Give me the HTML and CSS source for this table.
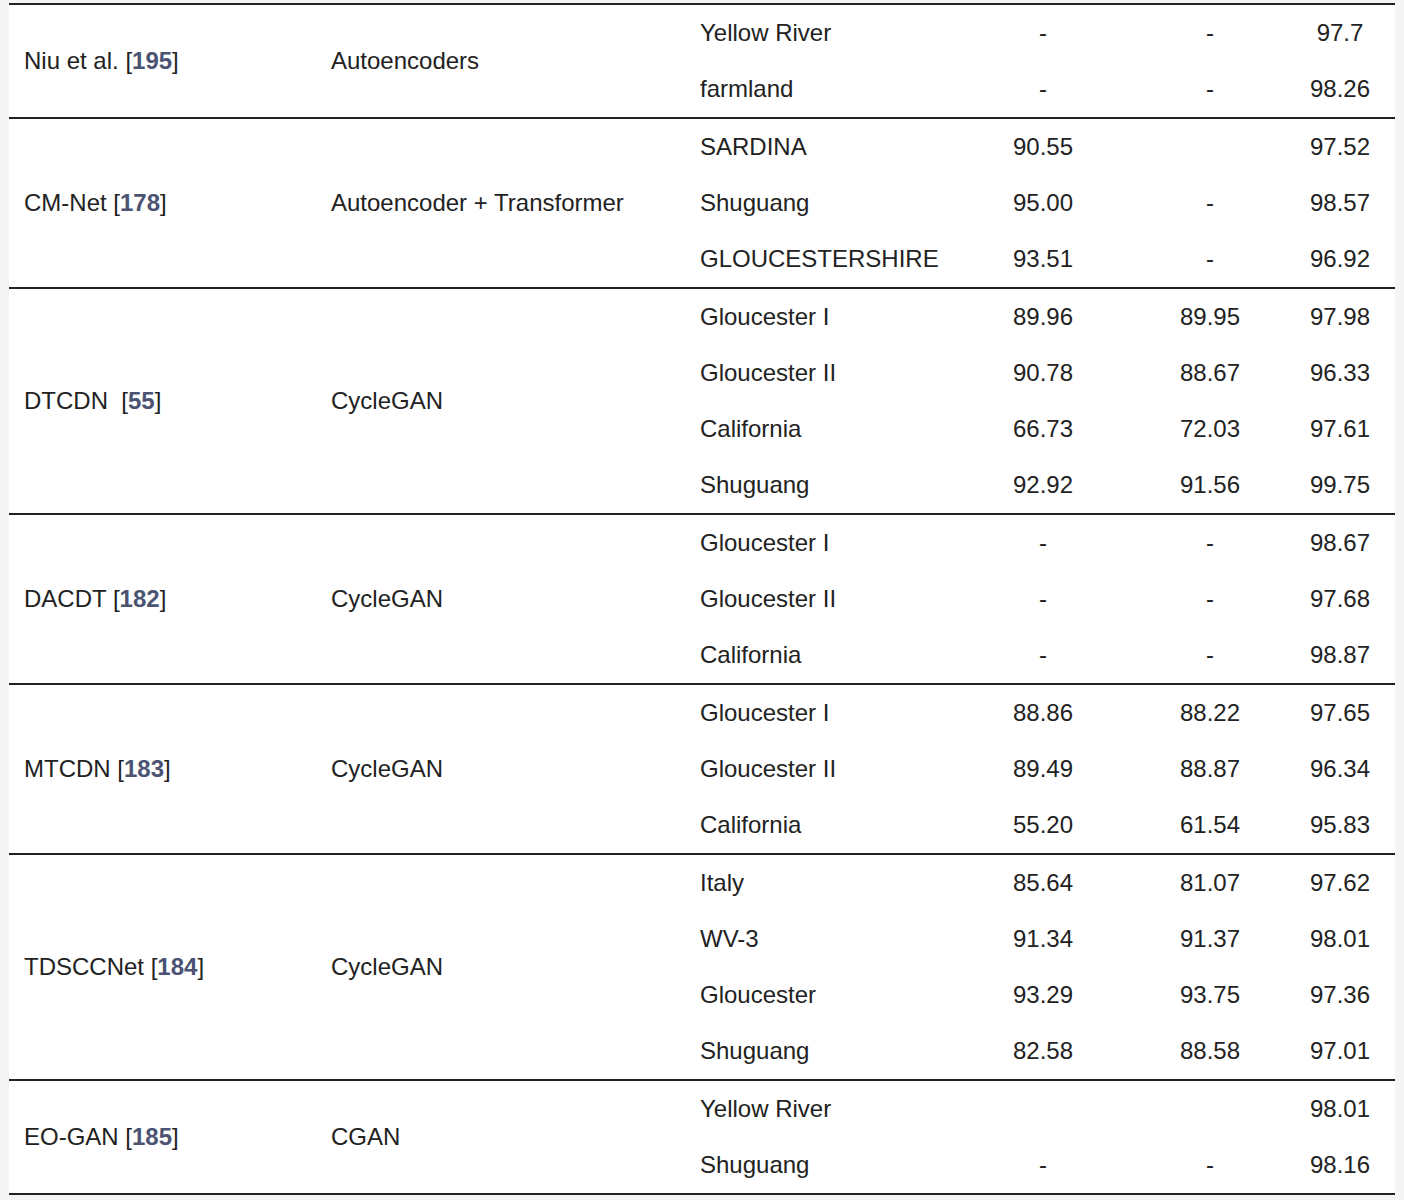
FILE: index.html
```html
<!DOCTYPE html>
<html>
<head>
<meta charset="utf-8">
<link rel="stylesheet" href="styles.css">
</head>
<body>
<table class="results">
<colgroup>
<col class="c1"><col class="c2"><col class="c3"><col class="c4"><col class="c5"><col class="c6">
</colgroup>
<tbody>
<tr class="grp"><td class="name" rowspan="2">Niu et al. [<a class="ref">195</a>]</td><td class="model" rowspan="2">Autoencoders</td><td class="ds">Yellow River</td><td class="num">-</td><td class="num">-</td><td class="num">97.7</td></tr>
<tr><td class="ds">farmland</td><td class="num">-</td><td class="num">-</td><td class="num">98.26</td></tr>

<tr class="grp"><td class="name" rowspan="3">CM-Net [<a class="ref">178</a>]</td><td class="model" rowspan="3">Autoencoder + Transformer</td><td class="ds">SARDINA</td><td class="num">90.55</td><td class="num"></td><td class="num">97.52</td></tr>
<tr><td class="ds">Shuguang</td><td class="num">95.00</td><td class="num">-</td><td class="num">98.57</td></tr>
<tr><td class="ds">GLOUCESTERSHIRE</td><td class="num">93.51</td><td class="num">-</td><td class="num">96.92</td></tr>

<tr class="grp"><td class="name" rowspan="4">DTCDN&nbsp; [<a class="ref">55</a>]</td><td class="model" rowspan="4">CycleGAN</td><td class="ds">Gloucester I</td><td class="num">89.96</td><td class="num">89.95</td><td class="num">97.98</td></tr>
<tr><td class="ds">Gloucester II</td><td class="num">90.78</td><td class="num">88.67</td><td class="num">96.33</td></tr>
<tr><td class="ds">California</td><td class="num">66.73</td><td class="num">72.03</td><td class="num">97.61</td></tr>
<tr><td class="ds">Shuguang</td><td class="num">92.92</td><td class="num">91.56</td><td class="num">99.75</td></tr>

<tr class="grp"><td class="name" rowspan="3">DACDT [<a class="ref">182</a>]</td><td class="model" rowspan="3">CycleGAN</td><td class="ds">Gloucester I</td><td class="num">-</td><td class="num">-</td><td class="num">98.67</td></tr>
<tr><td class="ds">Gloucester II</td><td class="num">-</td><td class="num">-</td><td class="num">97.68</td></tr>
<tr><td class="ds">California</td><td class="num">-</td><td class="num">-</td><td class="num">98.87</td></tr>

<tr class="grp"><td class="name" rowspan="3">MTCDN [<a class="ref">183</a>]</td><td class="model" rowspan="3">CycleGAN</td><td class="ds">Gloucester I</td><td class="num">88.86</td><td class="num">88.22</td><td class="num">97.65</td></tr>
<tr><td class="ds">Gloucester II</td><td class="num">89.49</td><td class="num">88.87</td><td class="num">96.34</td></tr>
<tr><td class="ds">California</td><td class="num">55.20</td><td class="num">61.54</td><td class="num">95.83</td></tr>

<tr class="grp"><td class="name" rowspan="4">TDSCCNet [<a class="ref">184</a>]</td><td class="model" rowspan="4">CycleGAN</td><td class="ds">Italy</td><td class="num">85.64</td><td class="num">81.07</td><td class="num">97.62</td></tr>
<tr><td class="ds">WV-3</td><td class="num">91.34</td><td class="num">91.37</td><td class="num">98.01</td></tr>
<tr><td class="ds">Gloucester</td><td class="num">93.29</td><td class="num">93.75</td><td class="num">97.36</td></tr>
<tr><td class="ds">Shuguang</td><td class="num">82.58</td><td class="num">88.58</td><td class="num">97.01</td></tr>

<tr class="grp"><td class="name" rowspan="2">EO-GAN [<a class="ref">185</a>]</td><td class="model" rowspan="2">CGAN</td><td class="ds">Yellow River</td><td class="num"></td><td class="num"></td><td class="num">98.01</td></tr>
<tr><td class="ds">Shuguang</td><td class="num">-</td><td class="num">-</td><td class="num">98.16</td></tr>
</tbody>
</table>
</body>
</html>
```

FILE: styles.css
```css
html, body {
  margin: 0;
  padding: 0;
  background: #f5f5f5;
}
body {
  padding: 3px 9px 0 9px;
  font-family: "Liberation Sans", Arial, Helvetica, sans-serif;
  font-size: 24px;
  color: #222;
}
.results {
  width: 1386px;
  table-layout: fixed;
  border-collapse: separate;
  border-spacing: 0;
  background: #fff;
  border-top: 2px solid #222;
  border-bottom: 2px solid #222;
}
.c1 { width: 307px; }
.c2 { width: 369px; }
.c3 { width: 266px; }
.c4 { width: 184px; }
.c5 { width: 150px; }
.c6 { width: 110px; }
.results td {
  height: 56px;
  padding: 0;
  line-height: 28px;
  vertical-align: middle;
  white-space: nowrap;
}
.results tr.grp + tr td,
.results tr td { box-sizing: content-box; }
.results tbody tr.grp > td { border-top: 2px solid #222; }
.results tbody tr.grp:first-child > td { border-top: 0; }
.name, .model, .ds {
  text-align: left;
  padding-left: 15px !important;
}
.num { text-align: center; }
.ref {
  color: #4b5373;
  font-weight: bold;
  text-decoration: none;
}
```
